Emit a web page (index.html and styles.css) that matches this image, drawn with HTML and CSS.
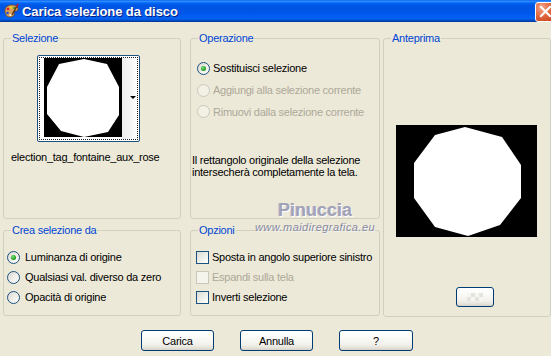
FILE: index.html
```html
<!DOCTYPE html>
<html lang="it">
<head>
<meta charset="utf-8">
<title>Carica selezione da disco</title>
<link rel="stylesheet" href="styles.css">
</head>
<body>
<div class="window">
  <div class="titlebar">
    <svg class="app-icon" width="16" height="16" viewBox="0 0 16 16">
      <path d="M2 8c0-4 3-6 7-6 4 0 6 2 6 4 0 2-2 2-3 2s-2 1-1 2c1 2-1 4-4 4-3 0-5-2-5-6z" fill="#d9a05b" stroke="#7a4a1a" stroke-width="0.8"/>
      <circle cx="5" cy="6" r="1.3" fill="#e02020"/>
      <circle cx="8" cy="4.5" r="1.3" fill="#f0d020"/>
      <circle cx="11.5" cy="5" r="1.2" fill="#2a9a2a"/>
      <circle cx="4.5" cy="10" r="1.3" fill="#2050d0"/>
      <circle cx="7.5" cy="12" r="1.1" fill="#ffffff"/>
      <path d="M9 12 L14 3" stroke="#5a3010" stroke-width="1.4"/>
      <path d="M13.4 3.8 L15 1" stroke="#c02020" stroke-width="1.6"/>
    </svg>
    <span class="title">Carica selezione da disco</span>
    <span class="close-btn">
      <svg width="13" height="13" viewBox="0 0 13 13"><path d="M2 2 L11 11 M11 2 L2 11" stroke="#fff" stroke-width="2.2" stroke-linecap="square"/></svg>
    </span>
  </div>

  <div class="client">
    <div class="groups">
      <div class="col col-left">
        <fieldset class="group group-top">
          <legend>Selezione</legend>
          <div class="combo">
            <div class="combo-inner">
              <svg class="thumb" width="78" height="79" viewBox="0 0 78 79">
                <rect width="78" height="79" fill="#000"/>
                <polygon points="40,1 63,6 75,29 75,57 64,74 40,79 17,73 3,56 3,29 15,6" fill="#fff"/>
              </svg>
              <div class="combo-strip"><span class="combo-arrow"></span></div>
            </div>
          </div>
          <div class="sel-name">election_tag_fontaine_aux_rose</div>
        </fieldset>

        <fieldset class="group group-bottom">
          <legend>Crea selezione da</legend>
          <div class="opt-list crea-list">
            <div class="opt"><span class="radio checked"></span><span>Luminanza di origine</span></div>
            <div class="opt"><span class="radio"></span><span>Qualsiasi val. diverso da zero</span></div>
            <div class="opt"><span class="radio"></span><span>Opacità di origine</span></div>
          </div>
        </fieldset>
      </div>

      <div class="col col-mid">
        <fieldset class="group group-top">
          <legend>Operazione</legend>
          <div class="opt-list op-list">
            <div class="opt"><span class="radio checked"></span><span>Sostituisci selezione</span></div>
            <div class="opt disabled"><span class="radio"></span><span>Aggiungi alla selezione corrente</span></div>
            <div class="opt disabled"><span class="radio"></span><span>Rimuovi dalla selezione corrente</span></div>
          </div>
          <p class="note">Il rettangolo originale della selezione<br>intersecherà completamente la tela.</p>
        </fieldset>

        <fieldset class="group group-bottom">
          <legend>Opzioni</legend>
          <div class="opt-list opz-list">
            <div class="opt"><span class="check"></span><span>Sposta in angolo superiore sinistro</span></div>
            <div class="opt disabled"><span class="check"></span><span>Espandi sulla tela</span></div>
            <div class="opt"><span class="check"></span><span>Inverti selezione</span></div>
          </div>
        </fieldset>
      </div>

      <div class="col col-right">
        <fieldset class="group group-full">
          <legend>Anteprima</legend>
          <svg class="preview" width="141" height="112" viewBox="0 0 141 112">
            <rect width="141" height="112" fill="#000"/>
            <polygon points="69,2 106,12 125,40 125,73 104,100 72,111 39,102 18,73 18,38 39,10" fill="#fff"/>
          </svg>
          <button class="btn small-btn" type="button"><span class="checker"></span></button>
        </fieldset>
      </div>
    </div>

    <div class="buttons">
      <button class="btn" type="button">Carica</button>
      <button class="btn" type="button">Annulla</button>
      <button class="btn btn-help" type="button">?</button>
    </div>
  </div>

  <div class="watermark">
    <span class="wm-name">Pinuccia</span>
    <span class="wm-url">www.maidiregrafica.eu</span>
  </div>
</div>
</body>
</html>
```

FILE: styles.css
```css
* { box-sizing: border-box; }

html, body {
  margin: 0;
  padding: 0;
}

body {
  width: 551px;
  height: 356px;
  overflow: hidden;
  background: #ece9d8;
  font-family: "Liberation Sans", Arial, sans-serif;
  font-size: 11px;
  letter-spacing: -0.25px;
  color: #000;
}

.window {
  position: relative;
  width: 551px;
  height: 356px;
  background: #ece9d8;
}

/* ---- title bar ---- */
.titlebar {
  height: 22px;
  display: flex;
  align-items: center;
  overflow: hidden;
  background: linear-gradient(to bottom,
    #0058ee 0%, #3a93ff 5%, #1a80ff 9%, #0466f6 14%, #0057e5 22%,
    #0054e3 40%, #0057ea 60%, #005df4 72%, #0262f0 84%,
    #0054d8 91%, #0042b0 95%, #00379a 100%);
}

.app-icon {
  margin-left: 3px;
  flex: none;
}

.title {
  margin-left: 3px;
  color: #fff;
  font-weight: bold;
  font-size: 13px;
  letter-spacing: -0.1px;
  text-shadow: 1px 1px 0 #0a1e7a;
}

.close-btn {
  margin-left: auto;
  margin-right: -5px;
  margin-top: 1px;
  width: 21px;
  height: 20px;
  flex: none;
  display: flex;
  align-items: center;
  justify-content: center;
  border: 1px solid #fff;
  border-radius: 3px;
  background: radial-gradient(circle at 30% 25%, #f2a58a 0%, #e3683f 45%, #cc4a23 80%, #b63c1c 100%);
}

/* ---- client area ---- */
.client {
  padding: 10px 0 0 3px;
}

.groups {
  display: flex;
  align-items: flex-start;
}

.col {
  display: flex;
  flex-direction: column;
  gap: 5px;
}

.col-left { width: 178px; margin-right: 9px; }
.col-mid { width: 190px; margin-right: 3px; }
.col-right { width: 168px; }

.group {
  margin: 0;
  padding: 0;
  border: 1px solid #d0d0bf;
  border-radius: 3px;
  min-width: 0;
}

.group legend {
  margin-left: 7px;
  padding: 0 1px;
  color: #0046d5;
  line-height: 12px;
  height: 12px;
}

.group-top { height: 187px; }
.group-bottom { height: 92px; }
.group-full { height: 285px; }

/* ---- selezione ---- */
.combo {
  margin: 11px 0 0 33px;
  width: 103px;
  height: 87px;
  border: 1px solid #1c5180;
  border-radius: 2px;
  background: #fff;
  padding: 1px;
}

.combo-inner {
  height: 100%;
  border: 1px dotted #222;
  display: flex;
  padding-left: 4px;
}

.thumb { display: block; flex: none; }

.combo-strip {
  flex: 1;
  display: flex;
  align-items: center;
  justify-content: flex-end;
  padding-right: 1px;
  background: linear-gradient(to right, #eeeeee 0, #f7f7f7 70%, #ffffff 100%);
}

.combo-arrow {
  width: 0;
  height: 0;
  border-left: 3px solid transparent;
  border-right: 3px solid transparent;
  border-top: 3px solid #000;
  margin-bottom: 3px;
}

.sel-name {
  margin: 9px 0 0 7px;
  line-height: 13px;
  white-space: nowrap;
}

/* ---- option lists ---- */
.opt-list {
  display: flex;
  flex-direction: column;
}

.opt {
  display: flex;
  align-items: center;
  gap: 3px;
  white-space: nowrap;
}

.op-list { margin: 13px 0 0 6px; }
.op-list .opt { height: 22px; }
.op-list .opt:nth-child(3) { height: 21px; }

.crea-list { margin: 11px 0 0 3px; }
.crea-list .opt { height: 20px; gap: 5px; }

.opz-list { margin: 11px 0 0 5px; }
.opz-list .opt { height: 20px; }

.opt.disabled { color: #aca899; }

.radio {
  position: relative;
  flex: none;
  width: 13px;
  height: 13px;
  border-radius: 50%;
  border: 1px solid #1c5180;
  background: linear-gradient(135deg, #d8d7cf 0%, #f0efea 55%, #ffffff 100%);
}

.radio.checked::after {
  content: "";
  position: absolute;
  left: 3px;
  top: 3px;
  width: 5px;
  height: 5px;
  border-radius: 50%;
  background: radial-gradient(circle at 40% 35%, #7be07b 0%, #21a121 60%, #1a8a1a 100%);
}

.disabled .radio {
  border-color: #cac8bb;
  background: #f3f1e6;
}

.check {
  flex: none;
  width: 13px;
  height: 13px;
  border: 1px solid #1c5180;
  background: linear-gradient(135deg, #dcdcd7 0%, #eeeee9 50%, #ffffff 100%);
}

.disabled .check {
  border-color: #cac8bb;
  background: #f5f4ec;
}

.note {
  margin: 32px 0 0 1px;
  line-height: 12px;
}

/* ---- buttons ---- */
.buttons {
  display: flex;
  justify-content: center;
  gap: 26px;
  margin-top: 13px;
}

.btn {
  width: 73px;
  height: 21px;
  padding: 0;
  font-family: "Liberation Sans", Arial, sans-serif;
  font-size: 11px;
  letter-spacing: -0.25px;
  color: #000;
  border: 1px solid #003c74;
  border-radius: 3px;
  background: linear-gradient(to bottom, #ffffff 0%, #fbfbf9 30%, #f2f1ec 70%, #e3e1d8 90%, #d6d0c5 100%);
}

.btn-help { width: 74px; }

/* ---- anteprima ---- */
.preview {
  display: block;
  margin: 81px 0 0 12px;
}

.btn.small-btn {
  display: flex;
  align-items: center;
  justify-content: center;
  width: 38px;
  height: 20px;
  margin: 50px 0 0 72px;
  padding: 0;
}

.checker {
  width: 16px;
  height: 8px;
  background-color: #f6f6f3;
  background-image:
    linear-gradient(45deg, #e4e3dc 25%, transparent 25%, transparent 75%, #e4e3dc 75%),
    linear-gradient(45deg, #e4e3dc 25%, transparent 25%, transparent 75%, #e4e3dc 75%);
  background-size: 8px 8px;
  background-position: 0 0, 4px 4px;
}

/* ---- watermark overlay ---- */
.watermark {
  position: absolute;
  left: 253px;
  top: 199px;
  display: flex;
  flex-direction: column;
  align-items: center;
  width: 124px;
  pointer-events: none;
}

.wm-name {
  font-family: "Liberation Sans", Arial, sans-serif;
  font-weight: bold;
  font-size: 18px;
  letter-spacing: 0;
  line-height: 22px;
  color: #a2a2b6;
  text-shadow: 1px 1px 0 #ffffff, -1px 0 0 #c8c8d4;
}

.wm-url {
  font-family: "Liberation Sans", Arial, sans-serif;
  font-style: italic;
  font-size: 11px;
  letter-spacing: 0.45px;
  line-height: 12px;
  color: #8a8a9e;
  text-shadow: 1px 1px 0 #f4f4f4;
}
```
